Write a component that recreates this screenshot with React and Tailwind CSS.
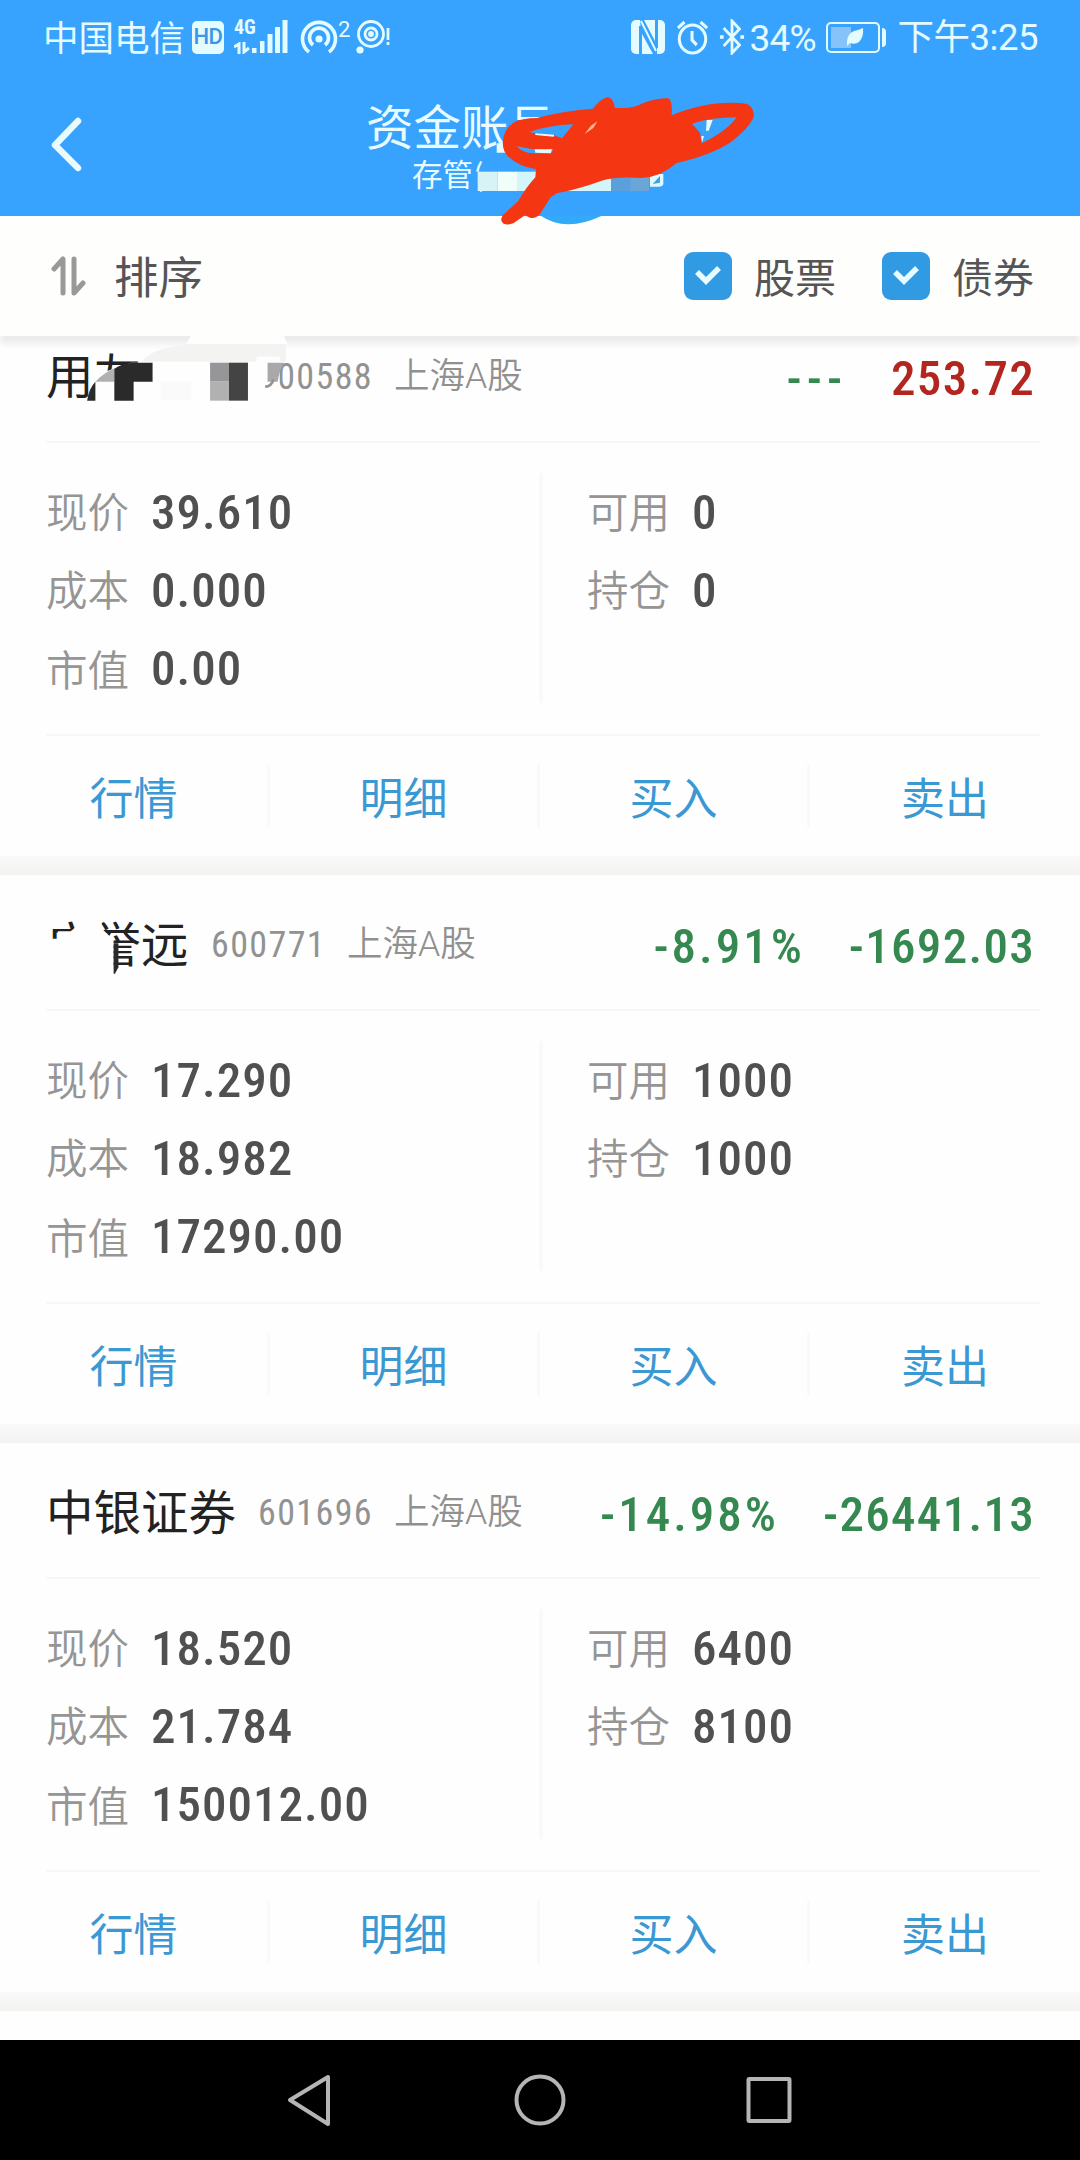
const holdings = [
    {
        name: '用友',
        nameWidth: 'w-[188px]',
        code: '600588',
        market: '上海A股',
        percent: '---',
        profit: '253.72',
        up: true,
        price: '39.610',
        cost: '0.000',
        value: '0.00',
        available: '0',
        position: '0',
    },
    {
        name: '广誉远',
        nameWidth: 'w-[141px]',
        code: '600771',
        market: '上海A股',
        percent: '-8.91%',
        profit: '-1692.03',
        price: '17.290',
        cost: '18.982',
        value: '17290.00',
        available: '1000',
        position: '1000',
    },
    {
        name: '中银证券',
        nameWidth: 'w-[188px]',
        code: '601696',
        market: '上海A股',
        percent: '-14.98%',
        profit: '-26441.13',
        price: '18.520',
        cost: '21.784',
        value: '150012.00',
        available: '6400',
        position: '8100',
    },
];

const actions = ['行情', '明细', '买入', '卖出'];

function StatusBar() {
    return (
        <div className="flex h-[74px] items-center justify-between pl-[43px] pr-[42px] text-[#e4fbff]">
            <div className="flex items-center">
                <span className="-mt-[2px] w-[149px] whitespace-nowrap text-[35.5px] leading-[36px]">中国电信</span>
                <span className="flex h-[33px] w-[32px] items-center justify-center rounded-[5px] bg-[#e4fbff] text-[22px] leading-none font-medium tracking-tight text-[#3a98e6] [font-family:Roboto]">HD</span>
                <div className="ml-[10px] flex h-[34px] items-end">
                    <div className="flex h-full w-[16px] flex-col justify-between">
                        <span className="font-stretch-75% text-[20px] leading-[15px] font-bold [font-family:Roboto]">4G</span>
                        <svg className="h-[12px] w-[16px]" viewBox="0 0 16 12" fill="none" stroke="currentColor" strokeWidth="3">
                            <path d="M0 5l5-3v10M10 0v10l5-4" />
                        </svg>
                    </div>
                    <svg className="h-[34px] w-[38px]" viewBox="0 0 38 34" fill="currentColor">
                        <rect x="2" y="28" width="4.5" height="5" />
                        <rect x="10" y="21" width="4.5" height="12" />
                        <rect x="17.500" y="14" width="5" height="19" />
                        <rect x="25" y="7" width="5" height="26" />
                        <rect x="32.500" y="0" width="5" height="33" />
                    </svg>
                </div>
                {/* hotspot */}
                <svg className="ml-[12px] h-[34px] w-[38px]" viewBox="0 0 38 34" fill="none" stroke="currentColor" strokeWidth="3.6">
                    <path d="M9 32A16.500 16.500 0 1 1 29 32" />
                    <path d="M13 25A9.500 9.500 0 1 1 25 25" />
                    <circle cx="19" cy="19" r="3.6" fill="currentColor" stroke="none" />
                </svg>
                <span className="-mt-[15px] w-[16px] text-[22px] leading-none [font-family:Roboto]">2</span>
                {/* eye comfort */}
                <svg className="ml-[2px] h-[34px] w-[34px]" viewBox="0 0 34 34" fill="none" stroke="currentColor" strokeWidth="2.8">
                    <circle cx="15" cy="14" r="12.500" />
                    <circle cx="15" cy="14" r="6" />
                    <circle cx="15" cy="14" r="1.500" fill="currentColor" />
                    <circle cx="4" cy="30" r="3.6" fill="currentColor" stroke="none" />
                    <path d="M32 8v12M32 22v3" />
                </svg>
            </div>

            <div className="flex items-center">
                {/* NFC */}
                <svg className="h-[34px] w-[34px]" viewBox="0 0 34 34">
                    <rect x="0" y="0" width="34" height="34" rx="5" fill="currentColor" />
                    <path d="M9.500 34V6M25.500 28V0" fill="none" stroke="#37a3ff" strokeWidth="3" />
                    <path d="M9 0h4L26 25v9h-4L10 12z" fill="#37a3ff" />
                    <path d="M10 1L25 31" fill="none" stroke="currentColor" strokeWidth="2" />
                </svg>
                <svg className="ml-[11px] h-[35px] w-[33px]" viewBox="0 0 35 35" preserveAspectRatio="none" fill="none" stroke="currentColor" strokeWidth="3.2">
                    <circle cx="17.500" cy="19" r="14" />
                    <path d="M17 11v9l5 5M2 8l7-6M33 8l-7-6" />
                </svg>
                <svg className="ml-[10px] h-[36px] w-[26px]" viewBox="0 0 28 36" preserveAspectRatio="none" fill="none" stroke="currentColor" strokeWidth="3">
                    <path d="M5 9l17 17-8 8V2l8 8L5 27" />
                    <path d="M1 18h4M23 18h4" strokeWidth="3.500" />
                </svg>
                <span className="mt-[2px] ml-[5px] w-[76px] text-[37px] leading-none tracking-[-0.8px] [font-family:Roboto]">34%</span>
                <div className="flex h-[31px] w-[54px] items-center rounded-[5px] border-2 border-current p-[3px]">
                    <div className="h-full w-[20px] bg-[#86c3fb]" />
                    <svg className="-ml-[5px] h-[20px] w-[18px]" viewBox="0 0 18 20" fill="currentColor">
                        <path d="M17 1Q18 10 13 15Q9 18 4 16L1 19V15Q1 7 8 4Q13 3 17 1z" />
                    </svg>
                </div>
                <div className="ml-[2px] h-[19px] w-[4px] rounded-r bg-current" />
                <span className="ml-[12px] mt-[1px] whitespace-nowrap text-[36.5px] leading-[36px] tracking-[-0.5px] [font-family:Roboto,'Noto_Sans_CJK_SC',sans-serif]">下午3:25</span>
            </div>
        </div>
    );
}

// Red marker strokes over the account number
function Scribble() {
    return (
        <svg className="absolute top-[90px] left-[340px] z-20 h-[150px] w-[440px]" viewBox="0 0 1320 450">
            <path d="M398 245h20v60h-20z" fill="#37a3ff" />
            <rect x="413" y="245" width="60" height="58" fill="#d8f3f5" />
            <rect x="473" y="245" width="58" height="58" fill="#f0fefa" />
            <rect x="531" y="245" width="282" height="58" fill="#d3f6fc" />
            <rect x="813" y="245" width="58" height="58" fill="#5b9fdb" />
            <rect x="871" y="245" width="56" height="58" fill="#6ba6d6" />
            <path d="M930 252h40v28q0 10-12 10h-28z" fill="#dcfaff" />
            <path d="M938 282l22-24v20z" fill="#4c9cdd" />
            <path d="M597 374q45 30 90 29q45-1 97-25z" fill="#33a9fa" />
            <path d="M604 60h30v50h-30zM560 95h150v100h-150z" fill="#37a3ff" />
            <path d="M470 160h40v28h-40zM1100 90h18l-12 32h-8zM1084 138h8l-6 20z" fill="#e6fbff" />
            <path
                fill="#f53613"
                fillRule="evenodd"
                d="M484 392Q482 378 500 365L535 332Q560 290 586 262L588 238Q535 228 505 200Q485 180 489 150Q492 118 520 98Q545 84 590 84Q660 64 758 56Q780 28 803 21Q822 26 824 53Q880 58 908 40Q950 24 986 25Q998 34 995 76Q1050 52 1115 42Q1180 35 1222 42Q1246 56 1240 84Q1222 120 1170 158Q1110 196 1010 219Q960 262 905 264Q830 258 785 272Q720 296 650 310L632 322L600 372Q585 388 570 383L555 376L520 400Q492 410 484 392Z
                M568 126Q625 106 700 103L666 145L642 136L585 130Z
                M530 168Q580 182 640 178L634 190L580 190Q548 190 530 168Z
                M1056 101Q1115 82 1190 82Q1160 124 1085 160L1080 128Z"
            />
            <path d="M586 130l56 4v6l-56-5zM584 178h52l-4 12-46-2z" fill="#e6fbff" />
            <path d="M734 132l18-24 20-14-12 20z" fill="#ffb8a0" />
        </svg>
    );
}

function Header() {
    return (
        <header className="relative h-[216px] bg-[#37a3ff]">
            <StatusBar />
            <svg className="absolute top-[116px] left-[50px] h-[56px] w-[32px]" viewBox="0 0 32 56" fill="none" stroke="#e8fcff" strokeWidth="6.500" strokeLinecap="round" strokeLinejoin="round">
                <path d="M28 5L5 29l23 23" />
            </svg>
            <div className="flex flex-col pl-[366px] pt-[27px] text-[#e8fcff]">
                <span className="text-[47.5px] leading-[48px]">资金账号</span>
                <span className="pl-[46px] pt-[9px] text-[30.5px] leading-[31px]">存管(</span>
            </div>
            <Scribble />
        </header>
    );
}

function Checkbox({ label }) {
    return (
        <label className="flex items-center gap-[22px]">
            <span className="flex h-[48px] w-[48px] items-center justify-center rounded-[9px] bg-[#309ae3]">
                <svg className="h-[22px] w-[26px]" viewBox="0 0 26 22" fill="none" stroke="#e8fcff" strokeWidth="5.500">
                    <path d="M2 7l9 9L24 3" />
                </svg>
            </span>
            <span className="-mt-[2px] w-[82px] whitespace-nowrap text-[41px] leading-[41px]">{label}</span>
        </label>
    );
}

function FilterBar() {
    return (
        <div className="relative z-10 flex h-[120px] items-center bg-[#fefefd] pr-[46px] pl-[50px] text-[#555] shadow-[0_8px_6px_0px_#ececec]">
            <svg className="h-[40px] w-[38px]" viewBox="0 0 38 40" fill="none" stroke="#999" strokeWidth="5" strokeLinecap="round" strokeLinejoin="round">
                <path d="M4 13l9-10v34M24 3v34l9-10" />
            </svg>
            <span className="-mt-[2px] ml-[26px] text-[44.5px] leading-[44px]">排序</span>
            <div className="ml-auto flex gap-[46px]">
                <Checkbox label="股票" />
                <Checkbox label="债券" />
            </div>
        </div>
    );
}

function Field({ label, value }) {
    return (
        <div className="group flex h-[78px] items-center">
            <span className="-mt-[4px] w-[105px] text-[41.5px] leading-[41px] text-[#959595] [font-weight:350] group-nth-3:mt-0">{label}</span>
            <span className="font-stretch-75% text-[49px] leading-[49px] font-medium tracking-[1px] text-[#505050] [font-family:Roboto]">{value}</span>
        </div>
    );
}

function Holding({ item }) {
    return (
        <section>
            <div className="ml-[46px] mr-[40px] flex h-[136px] items-center border-b-2 border-[#f7f7f7] pr-[5px] whitespace-nowrap">
                <span className={`${item.nameWidth} -mt-[2px] text-[47.5px] leading-[47px] text-[#222]`}>{item.name}</span>
                <span className="font-stretch-75% mt-[6px] ml-[24px] w-[136px] text-[36px] leading-[36px] tracking-[1.4px] text-[#929292] [font-family:Roboto]">{item.code}</span>
                <span className="mt-[5px] text-[35.5px] leading-[35px] text-[#909090] [font-weight:350] [font-family:Roboto,'Noto_Sans_CJK_SC',sans-serif]">{item.market}</span>
                <div className={`font-stretch-75% mt-[9px] ml-auto flex gap-[44px] text-[49px] leading-[49px] font-medium tracking-[1.3px] [font-family:Roboto] ${item.up ? 'text-[#b32620]' : 'text-[#35884f]'}`}>
                    <span className={item.percent === '---' ? 'tracking-[5px] text-[#35884f]' : 'tracking-[3px]'}>{item.percent}</span>
                    <span>{item.profit}</span>
                </div>
            </div>
            <div className="ml-[46px] mr-[40px] flex h-[293px] border-b-2 border-[#f7f7f7] pt-[30px]">
                <div className="w-[493px]">
                    <Field label="现价" value={item.price} />
                    <Field label="成本" value={item.cost} />
                    <Field label="市值" value={item.value} />
                </div>
                <div className="h-[230px] w-[4px] bg-[#f9f9f9]" />
                <div className="pl-[44px]">
                    <Field label="可用" value={item.available} />
                    <Field label="持仓" value={item.position} />
                </div>
            </div>
            <div className="grid h-[120px] grid-cols-4 items-center">
                {actions.map((action) => (
                    <div key={action} className="flex h-[62px] items-center justify-center border-r-3 border-[#f9f9f9] text-[44px] leading-[44px] text-[#3b98d3] last:border-r-0">
                        {action}
                    </div>
                ))}
            </div>
            <div className="h-[19px] bg-linear-to-b from-[#f9f9f9] to-[#f3f3f2]" />
        </section>
    );
}

function NameMosaic() {
    return (
        <svg className="absolute top-[210px] left-0 z-20 h-[240px] w-[540px]" viewBox="0 0 1568 720" preserveAspectRatio="none">
            <path d="M560 368H820L835 402H540z" fill="#fefefe" />
            <path d="M410 455Q440 412 560 402H830V455z" fill="#f3f3f2" />
            <path d="M262 500L380 458H443V590H262z" fill="#fefefe" />
            <path d="M277 515Q300 490 332 475V515z" fill="#b0b0b0" />
            <path d="M332 476Q350 462 380 458H443V515H388V572H332z" fill="#2a2a2a" />
            <path d="M253 572Q258 535 277 515V572z" fill="#2a2a2a" />
            <path d="M466 515H556V570H466z" fill="#fafafa" />
            <path d="M610 458H665V515H610z" fill="#969698" />
            <path d="M610 515H665V572H610z" fill="#b1b1b1" />
            <path d="M665 458H720V572H665z" fill="#444" />
            <path d="M745 440H812V560H745z" fill="#fefefe" />
            <path d="M777 458H824Q812 480 806 515H777z" fill="#a9a9a9" />
            <path d="M770 530Q788 530 794 508" fill="none" stroke="#929292" strokeWidth="8" />
        </svg>
    );
}

function NameEraser() {
    return (
        <svg className="absolute top-[880px] left-0 z-20 h-[100px] w-[200px]" viewBox="0 0 581 300" preserveAspectRatio="none">
            <path d="M100 176H168V154H205L222 140V100H288L300 150L330 180V292H100z" fill="#fefefe" />
            <path d="M330 190H344V262L334 281H330z" fill="#2a2a2a" />
        </svg>
    );
}

function NavBar() {
    return (
        <nav className="mt-auto h-[120px] bg-black">
            <svg className="h-[120px] w-[1080px]" viewBox="0 0 1080 120" fill="none" stroke="#b5b5b5" strokeWidth="4" strokeLinejoin="round">
                <path d="M328 37v47L290 60z" />
                <circle cx="540" cy="60" r="23.500" />
                <rect x="748.500" y="39" width="41" height="42" rx="1" />
            </svg>
        </nav>
    );
}

export default function App() {
    return (
        <div className="relative flex h-[2160px] w-[1080px] flex-col overflow-hidden bg-[#fefefe] [font-family:'Noto_Sans_CJK_SC',sans-serif]">
            <Header />
            <FilterBar />
            <main className="-mt-[29px]">
                {holdings.map((item) => (
                    <Holding key={item.code} item={item} />
                ))}
            </main>
            <NameMosaic />
            <NameEraser />
            <NavBar />
        </div>
    );
}
